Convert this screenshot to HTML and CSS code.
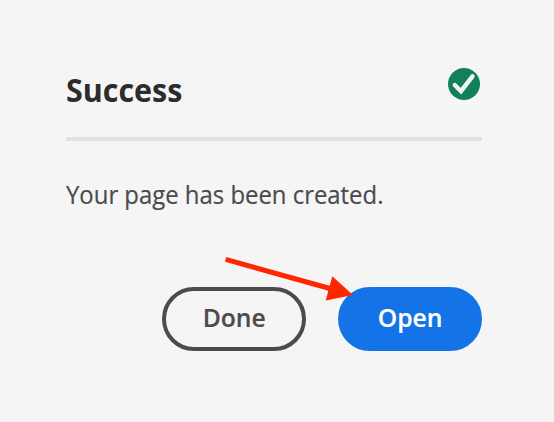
FILE: index.html
```html
<!DOCTYPE html>
<html lang="en">
<head>
<meta charset="utf-8">
<title>Success</title>
<link rel="stylesheet" href="styles.css">
</head>
<body>
<main class="dialog">
  <header class="dialog-header">
    <h1 class="title"><span class="title-text">Success</span></h1>
    <svg class="status" viewBox="0 0 32 32" aria-hidden="true">
      <circle cx="16" cy="16" r="16" fill="#12805c"/>
      <path d="M6.8 17 13 23.2 24.5 8.3" fill="none" stroke="#f5f5f5" stroke-width="4.4" stroke-linecap="round" stroke-linejoin="miter"/>
    </svg>
  </header>
  <p class="message"><span class="message-text">Your page has been created.</span></p>
  <footer class="actions">
    <button class="button secondary"><span class="done-text">Done</span></button>
    <button class="button primary"><span class="open-text">Open</span></button>
    <svg class="pointer" viewBox="0 0 132 48" aria-hidden="true">
      <path d="M1.6 5.4 106 34.5" stroke="#ff2600" stroke-width="5"/>
      <path d="M108.3 22.2 129 41 101.7 46.5Z" fill="#ff2600"/>
    </svg>
  </footer>
</main>
</body>
</html>
```

FILE: styles.css
```css
* { box-sizing: border-box; }
body { margin: 0; min-height: 422px; background: #f5f5f5; font-family: "Open Sans", "Noto Sans", sans-serif; }
.dialog { width: 416px; margin-left: 66px; padding-top: 68px; }
.dialog-header { display: flex; justify-content: space-between; height: 73px; padding-right: 2px; border-bottom: 4px solid #e1e1e1; border-radius: 1px; }
.title { margin: 0; font-size: 33px; line-height: 44px; font-weight: 700; color: #2c2c2c; }
.title-text, .message-text, .done-text, .open-text { display: inline-block; white-space: nowrap; transform-origin: left center; }
.title-text { transform: scaleX(.923); }
.status { width: 32px; height: 32px; }
.message { margin: 33px 0 0; height: 40px; font-size: 26px; line-height: 40px; color: #4b4b4b; -webkit-text-stroke: .2px #4b4b4b; }
.message-text { transform: scaleX(.919); }
.actions { position: relative; display: flex; justify-content: flex-end; gap: 32px; margin-top: 73px; }
.button { width: 144px; height: 64px; padding: 0 0 3px; border: 4px solid #4b4b4b; border-radius: 32px; font: 600 26px/53px "Open Sans", sans-serif; }
.secondary { color: #4b4b4b; background: #f5f5f5; }
.primary { color: #fff; background: #1473e6; border-color: #1473e6; }
.done-text, .open-text { transform-origin: center; transform: scaleX(.95); -webkit-text-stroke: .2px currentColor; }
.pointer { position: absolute; left: 158px; top: -33px; width: 132px; height: 48px; }
```
